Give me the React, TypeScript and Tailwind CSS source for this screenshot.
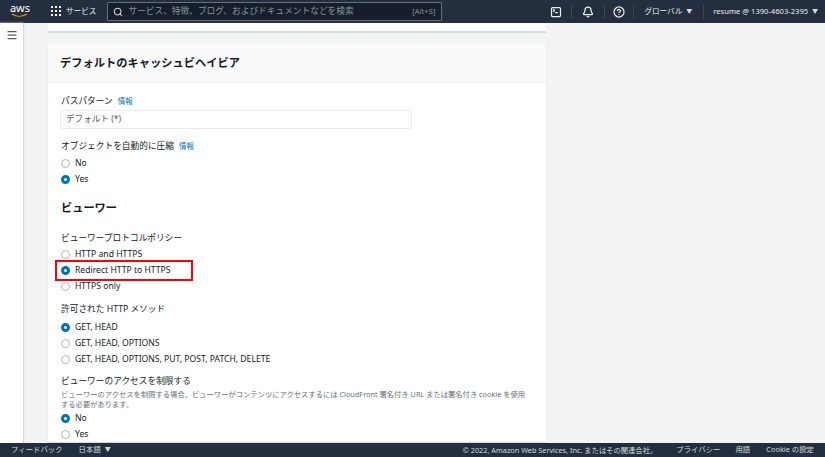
import { Bell, CircleHelp, Menu, Search, SquareTerminal } from "lucide-react";

const font = "font-['Noto_Sans','Noto_Sans_CJK_JP',sans-serif]";

function Radio({ label, checked }: { label: string; checked?: boolean }) {
  return (
    <div className="flex h-4 items-center gap-[5px] text-[8.6px] text-[#16191f]">
      {checked ? (
        <span className="ml-px h-[9px] w-[9px] rounded-full border-[3px] border-[#0073bb] bg-white" />
      ) : (
        <span className="ml-px h-[9px] w-[9px] rounded-full border border-[#aab7b8] bg-white" />
      )}
      <span>{label}</span>
    </div>
  );
}

function Dot() {
  return <span className="h-[2px] w-[2px] bg-white" />;
}

function Divider() {
  return <span className="h-[14px] w-px bg-[#414750]" />;
}

function Caret() {
  return <span className="text-[6px] text-[#d5dbdb]">▼</span>;
}

function TopBar() {
  return (
    <header className="flex h-[23px] shrink-0 items-center bg-[#232f3e] text-white">
      <div className="flex w-[40px] flex-col items-center leading-none">
        <span className="mt-[-2px] text-[11px] leading-[10px]">aws</span>
        <svg width="20" height="5" viewBox="0 0 20 5">
          <path d="M2 1c4 3 10 3 15 0" stroke="#f90" strokeWidth="1.2" fill="none" />
        </svg>
      </div>
      <div className="ml-[11px] mr-[11px] flex items-center gap-[5px]">
        <div className="grid grid-cols-3 gap-[2px]">
          <Dot /><Dot /><Dot /><Dot /><Dot /><Dot /><Dot /><Dot /><Dot />
        </div>
        <span className="text-[7.6px] text-[#eaeded]">サービス</span>
      </div>
      <div className="flex h-[19px] w-[335px] items-center gap-[5px] rounded-[1px] border border-[#687078] bg-[#161e2d] pl-[5px] pr-[6px]">
        <Search size={10} strokeWidth={2.5} className="text-[#d5dbdb]" />
        <span className="flex-1 text-[8.7px] text-[#879596]">
          サービス、特徴、ブログ、およびドキュメントなどを検索
        </span>
        <span className="text-[7.6px] text-[#879596]">[Alt+S]</span>
      </div>
      <div className="ml-[108px] flex items-center text-[#eaeded]">
        <SquareTerminal size={12} strokeWidth={2.5} className="mr-[9px]" />
        <Divider />
        <Bell size={12} strokeWidth={2.5} className="mx-[10px]" />
        <Divider />
        <CircleHelp size={12} strokeWidth={2.5} className="mx-[8px]" />
        <Divider />
        <div className="ml-[10px] mr-[11px] flex items-center gap-[4px] text-[7.6px]">
          グローバル <Caret />
        </div>
        <Divider />
        <div className="ml-[9px] flex items-center gap-[4px] text-[7.6px]">
          resume @ 1390-4603-2395 <Caret />
        </div>
      </div>
    </header>
  );
}

function Footer() {
  return (
    <footer className="flex h-[14px] shrink-0 items-center bg-[#232f3e] pl-[11px] pr-[11px] text-[7.4px] text-[#d5dbdb]">
      <span>フィードバック</span>
      <span className="ml-[16px] flex items-center gap-[4px]">
        日本語 <Caret />
      </span>
      <span className="ml-auto text-[7.3px]">© 2022, Amazon Web Services, Inc. またはその関連会社。</span>
      <span className="ml-[19px]">プライバシー</span>
      <span className="ml-[15px]">用語</span>
      <span className="ml-[16px]">Cookie の設定</span>
    </footer>
  );
}

function Info() {
  return <span className="ml-[5px] text-[7.5px] text-[#0073bb]">情報</span>;
}

export default function App() {
  return (
    <div className={`flex h-screen w-full flex-col overflow-hidden bg-[#f2f3f3] ${font}`}>
      <TopBar />
      <div className="flex min-h-0 flex-1">
        <aside className="w-[24px] shrink-0 border-r border-[#d5dbdb] bg-white pl-[6px] pt-[6px] shadow-[0_0_2px_#d5dbdb]">
          <Menu size={12} strokeWidth={2.5} className="text-[#545b64]" />
        </aside>
        <main className="ml-[24px] w-[498px] min-w-0 shrink-0">
          <div className="h-[10px] border-b-2 border-[#d5dbdb] bg-white" />
          <section className="mt-[10px] bg-white shadow-[0_1px_1px_#d5dbdb]">
            <div className="flex h-[40px] items-center border-b border-[#eaeded] bg-[#fafafa] px-3 pt-px text-[11.25px] font-bold text-[#16191f]">
              デフォルトのキャッシュビヘイビア
            </div>
            <div className="px-3 pt-[11px]">
              <div className="flex h-[16px] items-center pl-px text-[8.7px] text-[#16191f]">
                パスパターン <Info />
              </div>
              <div className="flex h-[19px] w-[352px] items-center border border-[#eaeded] pl-[5px] text-[8.6px] text-[#545b64]">
                デフォルト (*)
              </div>
              <div className="mt-[10px] flex h-[16px] items-center pl-px text-[8.7px] text-[#16191f]">
                オブジェクトを自動的に圧縮 <Info />
              </div>
              <div>
                <Radio label="No" />
                <Radio label="Yes" checked />
              </div>
              <h3 className="mt-[11px] h-[20px] pl-px text-[11.2px] font-bold leading-[20px] text-[#16191f]">ビューワー</h3>
              <div className="mt-[13px] flex h-[15px] items-center pl-px text-[8.7px] text-[#16191f]">
                ビューワープロトコルポリシー
              </div>
              <div className="relative">
                <Radio label="HTTP and HTTPS" />
                <Radio label="Redirect HTTP to HTTPS" checked />
                <Radio label="HTTPS only" />
                <div className="absolute left-[-5px] top-[14px] h-[21px] w-[138px] border-2 border-[#f00]" />
              </div>
              <div className="mt-[8px] flex h-[16px] items-center pl-px text-[8.7px] text-[#16191f]">
                許可された HTTP メソッド
              </div>
              <div className="mt-[1px]">
                <Radio label="GET, HEAD" checked />
                <Radio label="GET, HEAD, OPTIONS" />
                <Radio label="GET, HEAD, OPTIONS, PUT, POST, PATCH, DELETE" />
              </div>
              <div className="mt-[8px] flex h-[14px] items-center pl-px text-[8.7px] text-[#16191f]">
                ビューワーのアクセスを制限する
              </div>
              <p className="max-w-[468px] pl-px text-[7.3px] leading-[10px] text-[#687078]">
                ビューワーのアクセスを制限する場合、ビューワーがコンテンツにアクセスするには CloudFront 署名付き URL または署名付き cookie を使用する必要があります。
              </p>
              <div className="mt-[1px]">
                <Radio label="No" checked />
                <Radio label="Yes" />
              </div>
            </div>
          </section>
        </main>
      </div>
      <Footer />
    </div>
  );
}
